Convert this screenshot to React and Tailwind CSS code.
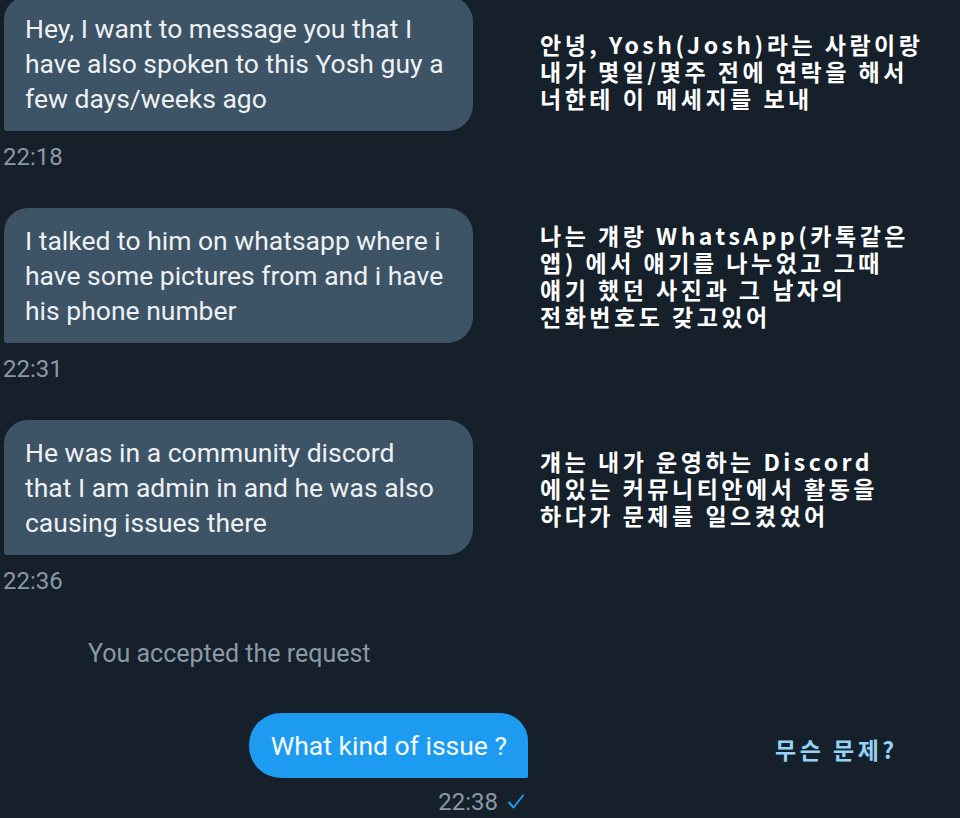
import React from "react";

const messages = [
  {
    lines: ["Hey, I want to message you that I", "have also spoken to this Yosh guy a", "few days/weeks ago"],
    time: "22:18",
    ko: ["안녕, Yosh(Josh)라는 사람이랑", "내가 몇일/몇주 전에 연락을 해서", "너한테 이 메세지를 보내"],
    koPad: "pt-[35px]",
  },
  {
    lines: ["I talked to him on whatsapp where i", "have some pictures from and i have", "his phone number"],
    time: "22:31",
    ko: ["나는 걔랑 WhatsApp(카톡같은", "앱) 에서 얘기를 나누었고 그때", "얘기 했던 사진과 그 남자의", "전화번호도 갖고있어"],
    koPad: "pt-[14px]",
  },
  {
    lines: ["He was in a community discord", "that I am admin in and he was also", "causing issues there"],
    time: "22:36",
    ko: ["걔는 내가 운영하는 Discord", "에있는 커뮤니티안에서 활동을", "하다가 문제를 일으켰었어"],
    koPad: "pt-[28px]",
  },
];

const roboto = { fontFamily: "Roboto, 'Noto Sans', sans-serif" };

function Translation({ lines, className = "" }) {
  return (
    <div
      className={`font-bold text-[23px] leading-[27px] tracking-[3.5px] whitespace-nowrap ${className}`}
      style={{ fontFamily: "'Noto Sans CJK KR', 'DejaVu Sans', sans-serif" }}
    >
      {lines.map((l) => (
        <div key={l}>{l}</div>
      ))}
    </div>
  );
}

function Incoming({ msg }) {
  return (
    <div className="flex">
      <div className="w-[540px] shrink-0">
        <div className="ml-[4px] w-[469px] rounded-tl-[24px] rounded-tr-[26px] rounded-br-[26px] rounded-bl-[3px] bg-[#3d5466] pl-[21px] pr-[12px] py-[15px] text-[26.5px] leading-[35px] text-[#eef1f3] whitespace-nowrap">
          {msg.lines.map((l) => (
            <div key={l}>{l}</div>
          ))}
        </div>
        <div className="mt-[12px] pl-[3px] text-[24px] leading-[28px] text-[#8b98a5]">
          {msg.time}
        </div>
      </div>
      <Translation lines={msg.ko} className={`${msg.koPad} text-white`} />
    </div>
  );
}

export default function App() {
  return (
    <div className="w-[960px] h-[818px] overflow-hidden bg-[#15202b]" style={roboto}>
      <div className="-mt-[4px] flex flex-col gap-[37px]">
        {messages.map((m) => (
          <Incoming key={m.time} msg={m} />
        ))}
      </div>

      <div className="mt-[44px] pl-[88px] text-[25px] leading-[30px] text-[#8b98a5]">
        You accepted the request
      </div>

      <div className="mt-[44px] flex">
        <div className="w-[528px] shrink-0 flex flex-col items-end">
          <div className="h-[65px] flex items-center rounded-l-[32px] rounded-tr-[28px] rounded-br-[2px] bg-[#1d9bf0] pl-[22px] pr-[21px] text-[26.5px] text-[#f5fbff]">
            What kind of issue ?
          </div>
          <div className="mt-[10px] flex items-center gap-[9px] pr-[3px] text-[24px] leading-[28px] text-[#8b98a5]">
            <span>22:38</span>
            <svg width="18" height="18" viewBox="0 0 18 18" fill="none">
              <path d="M2 9.5 L6.5 14.5 L16 2.5" stroke="#1d9bf0" strokeWidth="2" strokeLinecap="round" strokeLinejoin="round" />
            </svg>
          </div>
        </div>
        <Translation lines={["무슨 문제?"]} className="pl-[247px] pt-[23px] text-[#96d2f4]" />
      </div>
    </div>
  );
}
